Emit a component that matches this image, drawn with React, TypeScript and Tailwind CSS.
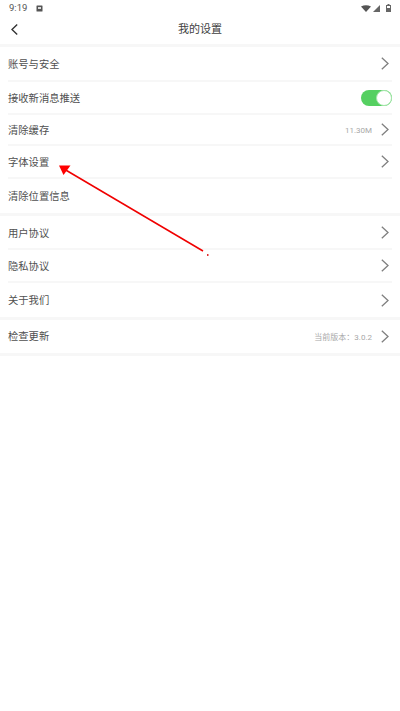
const FONT = "font-['Roboto','Noto_Sans_CJK_SC',sans-serif]";

function Chevron() {
    return (
        <svg width="8" height="13" viewBox="0 0 8 13" fill="none" className="mr-[3px] shrink-0">
            <path d="M0.8 0.8L7 6.500L0.8 12.200" stroke="#808080" strokeWidth="1.3" />
        </svg>
    );
}

type RowProps = {
    label: string;
    height: string;
    note?: string;
    arrow?: boolean;
    toggle?: boolean;
    divider?: boolean;
};

function Row({ label, height, note, arrow = true, toggle = false, divider = true }: RowProps) {
    return (
        <div className={`mx-2 flex items-center ${height} ${divider ? 'border-b-2 border-[#f7f7f7]' : ''}`}>
            <span className={`flex-1 text-[10.3px] text-[#505050] ${divider ? 'pt-[3px]' : 'pt-[1px]'}`}>{label}</span>
            {note && <span className="mr-[9px] pt-[2px] text-[8px] text-[#a8a8a8]">{note}</span>}
            {toggle && (
                <div className="flex h-4 w-[31px] items-center justify-end rounded-full bg-[#55d061]">
                    <div className="h-4 w-4 rounded-full border border-[#a5e6ab] bg-white" />
                </div>
            )}
            {arrow && <Chevron />}
        </div>
    );
}

function Gap() {
    return <div className="h-[3px] bg-[#f7f7f7]" />;
}

export default function App() {
    return (
        <div className={`relative h-[711px] w-[400px] overflow-hidden bg-white ${FONT}`}>
            <div className="flex h-[14px] items-center pl-[9px] pr-[9px] pt-[2px] text-[9.5px] text-[#555555]">
                <span>9:19</span>
                <svg width="7" height="7" viewBox="0 0 7 7" className="ml-[9px]">
                    <rect x="0.5" y="0.5" width="6" height="6" rx="0.5" fill="#555555" />
                    <rect x="2" y="2" width="3" height="2" fill="#dddddd" />
                </svg>
                <div className="ml-auto flex items-center">
                    <svg width="10" height="7" viewBox="0 0 10 7">
                        <path d="M0 1.500Q5 -1 10 1.500L5 7Z" fill="#555555" />
                    </svg>
                    <svg width="7" height="7" viewBox="0 0 7 7" className="ml-[2px]">
                        <path d="M0 7L7 0V7Z" fill="#666666" />
                    </svg>
                    <svg width="5" height="8" viewBox="0 0 5 8" className="ml-[6px]">
                        <rect x="0.5" y="1.500" width="4" height="6" fill="none" stroke="#666666" />
                        <rect x="1.500" y="0" width="2" height="1.500" fill="#666666" />
                        <rect x="1" y="4" width="3" height="3.500" fill="#666666" />
                    </svg>
                </div>
            </div>
            <div className="relative flex h-[30px] items-center justify-center pt-[3px]">
                <svg width="7" height="11" viewBox="0 0 7 11" fill="none" className="absolute left-[11px] top-[10px]">
                    <path d="M6.200 0.600L1 5.500L6.200 10.400" stroke="#333333" strokeWidth="1.400" />
                </svg>
                <span className="text-[11px] text-[#404040]">我的设置</span>
            </div>
            <Gap />
            <Row label="账号与安全" height="h-[35px]" />
            <Row label="接收新消息推送" height="h-[33px]" arrow={false} toggle />
            <Row label="清除缓存" height="h-[31px]" note="11.30M" />
            <Row label="字体设置" height="h-[33px]" />
            <Row label="清除位置信息" height="h-[34px]" arrow={false} divider={false} />
            <Gap />
            <Row label="用户协议" height="h-[34px]" />
            <Row label="隐私协议" height="h-[33px]" />
            <Row label="关于我们" height="h-[34px]" divider={false} />
            <Gap />
            <Row label="检查更新" height="h-[33px]" note="当前版本：3.0.2" divider={false} />
            <Gap />
            {/* annotation arrow drawn over the screenshot */}
            <svg width="400" height="711" className="pointer-events-none absolute left-0 top-0">
                <line x1="64" y1="169" x2="203" y2="251" stroke="#f00000" strokeWidth="1.500" />
                <path d="M59 165.500L70.500 165.500L63.500 175Z" fill="#ff0000" />
                <rect x="207" y="254" width="1.500" height="2" fill="#e03030" />
            </svg>
        </div>
    );
}
